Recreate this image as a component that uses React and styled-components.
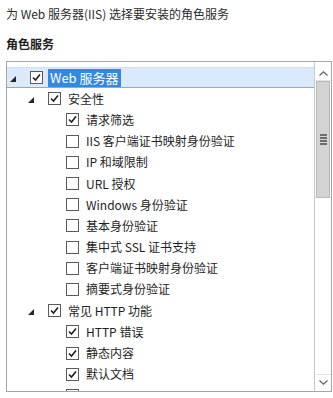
import styled, { createGlobalStyle } from "styled-components";

const items = [
    { level: 0, label: "Web 服务器", expanded: true, checked: true, selected: true },
    { level: 1, label: "安全性", expanded: true, checked: true },
    { level: 2, label: "请求筛选", checked: true },
    { level: 2, label: "IIS 客户端证书映射身份验证" },
    { level: 2, label: "IP 和域限制" },
    { level: 2, label: "URL 授权" },
    { level: 2, label: "Windows 身份验证" },
    { level: 2, label: "基本身份验证" },
    { level: 2, label: "集中式 SSL 证书支持" },
    { level: 2, label: "客户端证书映射身份验证" },
    { level: 2, label: "摘要式身份验证" },
    { level: 1, label: "常见 HTTP 功能", expanded: true, checked: true },
    { level: 2, label: "HTTP 错误", checked: true },
    { level: 2, label: "静态内容", checked: true },
    { level: 2, label: "默认文档", checked: true },
    { level: 2, label: "", checked: true },
];

function Expander({ expanded }) {
    return (
        <ExpanderBox>
            {expanded && (
                <svg width="6" height="6" viewBox="0 0 6 6">
                    <polygon points="6,0 6,6 0,6" fill="#262626" />
                </svg>
            )}
        </ExpanderBox>
    )
}

function CheckBox({ checked }) {
    return (
        <Box>
            {checked && (
                <svg width="11" height="11" viewBox="0 0 11 11">
                    <polyline points="2,5.5 4.5,8 9,2.5" fill="none" stroke="#1f1f1f" strokeWidth="1.6" />
                </svg>
            )}
        </Box>
    )
}

export default function App () {
    return (
        <Page>
            <GlobalStyle />
            <Intro>为 Web 服务器(IIS) 选择要安装的角色服务</Intro>
            <Heading>角色服务</Heading>

            <TreeFrame>
                <TreeList>
                    {items.map((item, idx) =>
                        <Row key={idx} $level={item.level} $selected={item.selected}>
                            <Expander expanded={item.expanded} />
                            <CheckBox checked={item.checked} />
                            {item.label && <Label $selected={item.selected}>{item.label}</Label>}
                        </Row>
                    )}
                </TreeList>

                <ScrollBar>
                    <ArrowButton>
                        <svg width="9" height="5" viewBox="0 0 9 5">
                            <polyline points="0.5,4.5 4.5,0.8 8.5,4.5" fill="none" stroke="#606060" strokeWidth="1.2" />
                        </svg>
                    </ArrowButton>
                    <Thumb>
                        <Grip />
                        <Grip />
                        <Grip />
                        <Grip />
                    </Thumb>
                    <Track />
                    <ArrowButton>
                        <svg width="9" height="5" viewBox="0 0 9 5">
                            <polyline points="0.5,0.5 4.5,4.2 8.5,0.5" fill="none" stroke="#606060" strokeWidth="1.2" />
                        </svg>
                    </ArrowButton>
                </ScrollBar>
            </TreeFrame>
        </Page>
    )
}

//Styled Components
const GlobalStyle = createGlobalStyle`
    body {
        margin: 0;
        background: #ffffff;
        font-family: "Noto Sans CJK SC", sans-serif;
    }
`
const Page = styled.div`
    width: 333px;
    height: 398px;
    padding: 6px 0 0 6px;
    box-sizing: border-box;
    overflow: hidden;
    color: #1e1e1e;
    font-size: 12px;
`
const Intro = styled.div`
    line-height: 16px;
    color: #2b2b2b;
`
const Heading = styled.div`
    margin-top: 14px;
    line-height: 16px;
    font-weight: bold;
`
const TreeFrame = styled.div`
    margin-top: 9px;
    width: 326px;
    height: 331px;
    box-sizing: border-box;
    border: 1px solid #a5a5a5;
    display: flex;
    overflow: hidden;
`
const TreeList = styled.div`
    flex: 1;
    padding-top: 5px;
    overflow: hidden;
`
const Row = styled.div`
    display: flex;
    align-items: center;
    height: 21.2px;
    box-sizing: border-box;
    padding-left: ${p => p.$level * 18}px;
    background: ${p => p.$selected ? "#dae9fb" : "transparent"};
    border-top: 1px solid ${p => p.$selected ? "#cfe0f5" : "transparent"};
    border-bottom: 1px solid ${p => p.$selected ? "#8ea9c9" : "transparent"};
`
const ExpanderBox = styled.div`
    width: 21px;
    height: 100%;
    display: flex;
    align-items: center;
    padding: 3px 0 0 3px;
    box-sizing: border-box;
`
const Box = styled.div`
    width: 13px;
    height: 13px;
    margin-left: 2px;
    box-sizing: border-box;
    border: 1px solid #5a5a5a;
    background: #ffffff;
    display: flex;
    align-items: center;
    justify-content: center;
`
const Label = styled.span`
    margin-left: 5px;
    padding: 1px 2px;
    line-height: 16px;
    white-space: nowrap;
    background: ${p => p.$selected ? "#3388e0" : "transparent"};
    color: ${p => p.$selected ? "#ffffff" : "#1e1e1e"};
    font-size: ${p => p.$selected ? "13px" : "12px"};
`
const ScrollBar = styled.div`
    width: 16px;
    display: flex;
    flex-direction: column;
    background: #ffffff;
    border-left: 1px solid #c8c8c8;
    padding-top: 5px;
`
const ArrowButton = styled.div`
    height: 13px;
    display: flex;
    align-items: center;
    justify-content: center;
    border-bottom: 1px solid #e4e4e4;

    &:last-child {
        border-bottom: none;
        border-top: 1px solid #e4e4e4;
        height: 15px;
        margin-bottom: 1px;
    }
`
const Thumb = styled.div`
    height: 117px;
    margin: 0 1px;
    box-sizing: border-box;
    background: #d4d4d4;
    border: 1px solid #b9b9b9;
    display: flex;
    flex-direction: column;
    align-items: center;
    justify-content: center;
    gap: 1px;
`
const Grip = styled.div`
    width: 7px;
    height: 2px;
    background: #6e6e6e;
`
const Track = styled.div`
    flex: 1;
`
